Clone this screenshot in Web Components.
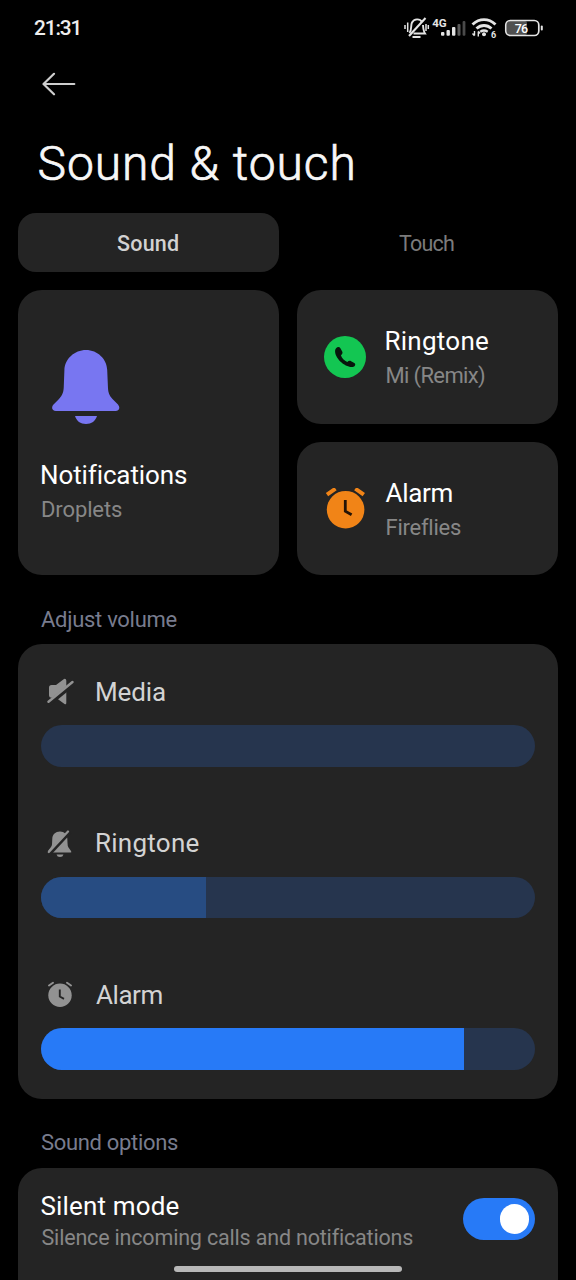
<!DOCTYPE html>
<html lang="en">
<head>
<meta charset="utf-8">
<title>Sound &amp; touch</title>
<style>
html,body{margin:0;background:#000}
body{width:576px;height:1280px;overflow:hidden;font-family:Roboto,"Noto Sans",sans-serif;color:#fff}
</style>
</head>
<body>
<settings-page></settings-page>
<script>
const define = (name, html, setup) => {
  const t = document.createElement('template');
  t.innerHTML = html;
  customElements.define(name, class extends HTMLElement {
    connectedCallback() {
      if (this.shadowRoot) return;
      const root = this.attachShadow({mode: 'open'});
      root.append(t.content.cloneNode(true));
      if (setup) setup(this, root);
    }
  });
};

/* A single line of text: its ink starts at the box edge and is tracked to the given width. */
const ctx = document.createElement('canvas').getContext('2d');
define('ui-text', `<style>:host{display:block;white-space:nowrap;flex:none}span{display:block}</style><span></span>`, (el, root) => {
  const s = root.querySelector('span');
  const size = +el.getAttribute('size'), weight = el.getAttribute('weight') || 400;
  const text = el.getAttribute('text'), width = +el.getAttribute('width');
  s.textContent = text;
  ctx.font = `${weight} ${size}px Roboto`;
  const m = ctx.measureText(text);
  const ink = m.actualBoundingBoxRight + m.actualBoundingBoxLeft;
  s.style.cssText = `font-size:${size}px;font-weight:${weight};line-height:${el.getAttribute('line')}px;color:${el.getAttribute('color')};width:${width}px;margin-left:${m.actualBoundingBoxLeft}px;margin-right:${-m.actualBoundingBoxLeft}px;font-variant-ligatures:none;letter-spacing:${(width - ink) / (text.length - 1)}px`;
});

const icons = {
  bell: `<svg width="68" height="76" viewBox="0 0 68 76"><path fill="#7876f1" d="M34 1C22.500 1 12.700 10 12.400 21L11.800 37C11.700 43 10.500 46 7 50L1.500 55.500C-1.200 58.500 .2 62 4 62H63.500C67.300 62 68.500 58.500 66 55.500L60.500 50C57 46 56 43 55.900 37L55.200 21C54.900 10 45.500 1 34 1ZM23 67H45C43.500 72 39.500 75 34 75S24.500 72 23 67Z"/></svg>`,
  phone: `<svg width="42" height="42" viewBox="0 0 42 42"><circle cx="21" cy="21" r="21" fill="#13c652"/><path fill="#07160c" d="M12.100 12.300C13.500 10.700 15.500 10.700 16.400 12.300L18.200 15.500C19 17 18.200 18.300 16.900 19.300C17.600 22 20.400 24.900 23.300 26C24.500 24.900 25.700 24.400 27.100 25.200L30.300 27C32.200 28.200 31 30.700 28.700 31C20.900 31.800 10.400 21.800 11.100 14.500C11.200 13.600 11.500 12.900 12.100 12.300Z"/></svg>`,
  clock: `<svg width="42" height="42" viewBox="0 0 42 42"><circle cx="21.600" cy="21.700" r="18.800" fill="#f18417"/><path stroke="#f18417" stroke-width="4" d="M3 6.700L11.500 .7M39.800 6.700L31.300 .7"/><path fill="none" stroke="#241407" stroke-width="2.800" d="M21.300 12V23.200L27.600 26.700"/></svg>`,
  mute: `<svg width="28" height="28" viewBox="0 0 28 28"><path fill="#929292" d="M2 9.500Q2 7 4.500 7H9L17 1Q19 .3 19.300 2.500V24.800Q19.300 27 17.500 26L9 19.800H4.500Q2 19.800 2 17.500Z"/><path stroke="#242424" stroke-width="5" d="M-.5 27.500L28.500 4"/><path stroke="#929292" stroke-width="2.400" stroke-linecap="round" d="M1.500 23.800L25.500 4"/></svg>`,
  belloff: `<svg width="28" height="28" viewBox="0 0 28 28"><path fill="#929292" d="M13 1.500C8.500 1.500 5.500 4.500 5.300 8.500L5 14.500C4.800 17 1 20 1 21.500Q1 22.500 2.200 22.500H23.500Q25 22.500 24 21L21.500 17.500Q20.500 16 20.500 13L20.300 8.500C20 4.500 17.500 1.500 13 1.500ZM9.500 24.500H16.500Q15.800 27 13 27T9.500 24.500Z"/><path stroke="#242424" stroke-width="3.600" d="M1.500 25L23.300 1.500"/><path stroke="#929292" stroke-width="2.200" stroke-linecap="round" d="M1.800 22L21 1.500"/></svg>`,
  alarm: `<svg width="28" height="28" viewBox="0 0 28 28"><circle cx="13" cy="14.300" r="11.700" fill="#929292"/><path stroke="#929292" stroke-width="2" stroke-linecap="round" d="M2 4.500L6 1.700M24 4.500L20 1.700"/><path fill="none" stroke="#242424" stroke-width="1.900" d="M12.800 8.500V15.500L17 17.800"/></svg>`
};

define('status-bar', `<style>
:host{display:flex;height:56px;padding:0 33px 0 34px;box-sizing:border-box;justify-content:space-between;align-items:center}
svg{display:block}text{font-family:Roboto,sans-serif}
</style>
<ui-text text="21:31" size="20.800" weight="500" width="44.500" line="57" color="#eee"></ui-text>
<svg width="139" height="24" viewBox="0 0 139 24" fill="none" stroke="#e4e4e4">
  <path stroke-width="1.900" d="M5.500 17C8 14 6.500 9.500 8 6.500C10 2.500 16 2.300 18 6M19 9C19.300 13.500 20 16 21 17.500H9.500"/>
  <path stroke-width="2.100" d="M5 20L21.500 2"/><path stroke-width="2" d="M8.500 21H16.500"/>
  <path stroke-width="1.500" d="M1 9V13M3.700 6.500V16M22 8V15M24.300 9V13"/>
  <text x="28.200" y="11" font-size="11.500" font-weight="700" fill="#e4e4e4" stroke="none" textLength="14.500" lengthAdjust="spacingAndGlyphs">4G</text>
  <g stroke="none" fill="#e4e4e4"><rect x="37" y="16" width="3.400" height="3.800" rx="1"/><rect x="42.500" y="14" width="3.400" height="5.800" rx="1"/><rect x="48" y="11" width="3.400" height="8.800" rx="1"/><rect x="53.500" y="8" width="3" height="11.800" rx="1" fill="#5a5a5a"/><rect x="58.600" y="5" width="2.800" height="14.800" rx="1" fill="#4a4a4a"/></g>
  <path stroke-width="2.900" d="M68.500 8.500C75.500 2 84.500 2 91.500 8.500M72.500 12.500C77 8.500 83 8.500 87.500 12.500"/>
  <path stroke-width="2.500" d="M76.300 15.700Q80 13.500 83.700 15.700"/><circle cx="80" cy="18.300" r="2" fill="#e4e4e4" stroke="none"/>
  <path stroke-width="1.400" d="M70.500 15V19.500M68.500 17.500L70.500 19.700M74.300 20.500V15.500M76 17.500L74.300 15.300"/>
  <text x="87" y="21.500" font-size="9" font-weight="700" fill="#e4e4e4" stroke="none">6</text>
  <rect x="103" y="5" width="20" height="14" rx="2" fill="#505050" stroke="none"/>
  <rect x="101.800" y="4.500" width="33" height="15" rx="4.500" stroke-width="1.700"/>
  <path stroke-width="2" stroke-linecap="round" d="M137.800 10.500V13.500"/>
  <text x="110.700" y="16.500" font-size="12.500" font-weight="500" fill="#fff" stroke="none" textLength="13.500">76</text>
</svg>`);

define('page-header', `<style>
:host{display:flex;flex-direction:column;height:157px;padding:16px 0 0 39.500px;box-sizing:border-box}
svg{display:block;margin-left:2.500px;flex:none}ui-text{margin-top:39px;-webkit-text-stroke:.7px #f7f7f7}
</style>
<svg width="34" height="24" viewBox="0 0 34 24" fill="none" stroke="#cecece" stroke-width="2.200" stroke-linecap="round" stroke-linejoin="round"><path d="M32.300 12H2M12 1.800L1.500 12L12 22.300"/></svg>
<ui-text text="Sound &amp; touch" size="48" weight="300" width="313" line="58" color="#f7f7f7"></ui-text>`);

define('tab-bar', `<style>
:host{display:grid;grid-template-columns:261px 261px;grid-template-rows:59px;gap:18px;height:59px}
div{display:flex;align-items:flex-start;justify-content:center;border-radius:18px;height:59px}
.on{background:#242424}
.on ui-text{margin-right:2px}.off ui-text{margin-right:2px}
</style>
<div class="on"><ui-text text="Sound" size="21.500" weight="500" width="61" line="61" color="#d2d2d2"></ui-text></div>
<div class="off"><ui-text text="Touch" size="21.500" width="55" line="61" color="#7b7b7b"></ui-text></div>`);

define('sound-tile', `<style>
:host{display:flex;background:#242424;border-radius:24px;box-sizing:border-box;align-items:center;padding-left:27px;gap:20.500px}
.labels{padding-top:2.500px}
:host([tall]){grid-row:span 2;flex-direction:column;align-items:flex-start;padding:59px 0 0 24px;gap:30px}
:host([tall]) .icon{margin-left:10px}
svg{display:block}
</style><div class="icon"></div><div class="labels"><slot></slot></div>`, (el, root) => {
  root.querySelector('.icon').innerHTML = icons[el.getAttribute('icon')];
});

define('volume-row', `<style>
:host{display:block;height:92px}
.head{display:flex;height:35px;align-items:center;gap:22px;padding-left:6px;margin-bottom:15.500px}
svg{display:block}
.track{height:41.500px;border-radius:21px;background:#26354e;overflow:hidden}
.fill{height:100%}
</style><div class="head"><div class="icon"></div><slot></slot></div><div class="track"><div class="fill"></div></div>`, (el, root) => {
  root.querySelector('.icon').innerHTML = icons[el.getAttribute('icon')];
  const f = root.querySelector('.fill');
  f.style.width = el.getAttribute('level') + 'px';
  f.style.background = el.getAttribute('tint');
});

define('volume-card', `<style>
:host{display:flex;flex-direction:column;gap:59.500px;height:455px;padding:30.500px 23px 0;box-sizing:border-box;background:#242424;border-radius:24px}
</style><slot></slot>`);

define('toggle-switch', `<style>
:host{display:flex;width:72px;height:42px;padding-right:6px;box-sizing:border-box;border-radius:21px;background:#277af7;align-items:center;justify-content:flex-end}
div{width:29.500px;height:29.500px;border-radius:50%;background:#fff}
</style><div></div>`);

define('option-card', `<style>
:host{display:flex;justify-content:space-between;align-items:flex-start;height:160px;padding:21.500px 23px 0 23.500px;box-sizing:border-box;background:#242424;border-radius:24px}
toggle-switch{margin-top:9px}
</style><div><slot></slot></div><toggle-switch></toggle-switch>`);

define('settings-page', `<style>
:host{display:block;position:relative;width:576px;height:1280px;overflow:hidden;background:#000}
main{display:flex;flex-direction:column;padding:0 18px}
.tiles{display:grid;grid-template-columns:261px 261px;grid-template-rows:134px 133px;gap:18px;margin-top:18px}
.section{padding-left:23px}
.home{position:absolute;left:174px;top:1265.500px;width:228px;height:6px;border-radius:3px;background:#b8b8b8}
</style>
<status-bar></status-bar>
<page-header></page-header>
<main>
  <tab-bar></tab-bar>
  <div class="tiles">
    <sound-tile tall icon="bell">
      <ui-text text="Notifications" size="26" width="144" line="35" color="#fff"></ui-text>
      <ui-text text="Droplets" size="22" width="80" line="33" color="#878787"></ui-text>
    </sound-tile>
    <sound-tile icon="phone">
      <ui-text text="Ringtone" size="26" width="101.500" line="35" color="#fff"></ui-text>
      <ui-text text="Mi (Remix)" size="22" width="98.500" line="33" color="#878787"></ui-text>
    </sound-tile>
    <sound-tile icon="clock">
      <ui-text text="Alarm" size="26" width="67" line="35" color="#fff" style="margin-left:-1px"></ui-text>
      <ui-text text="Fireflies" size="22" width="74" line="33" color="#878787"></ui-text>
    </sound-tile>
  </div>
  <div class="section" style="height:69px"><ui-text text="Adjust volume" size="22" width="135.500" line="89" color="#787c8e"></ui-text></div>
  <volume-card>
    <volume-row icon="mute" level="0" tint="#274c82"><ui-text text="Media" size="26" width="68" line="35" color="#d3d3d3"></ui-text></volume-row>
    <volume-row icon="belloff" level="165" tint="#274c82"><ui-text text="Ringtone" size="26" width="101.500" line="35" color="#d3d3d3"></ui-text></volume-row>
    <volume-row icon="alarm" level="422.500" tint="#277af7"><ui-text text="Alarm" size="26" width="66.500" line="35" color="#d3d3d3" style="margin-left:-1px"></ui-text></volume-row>
  </volume-card>
  <div class="section" style="height:68.500px"><ui-text text="Sound options" size="22" width="137" line="87" color="#787c8e"></ui-text></div>
  <option-card>
    <ui-text text="Silent mode" size="26" width="137" line="34" color="#fff"></ui-text>
    <ui-text text="Silence incoming calls and notifications" size="21.500" width="371" line="30" color="#878787"></ui-text>
  </option-card>
</main>
<div class="home"></div>`);
</script>
</body>
</html>
